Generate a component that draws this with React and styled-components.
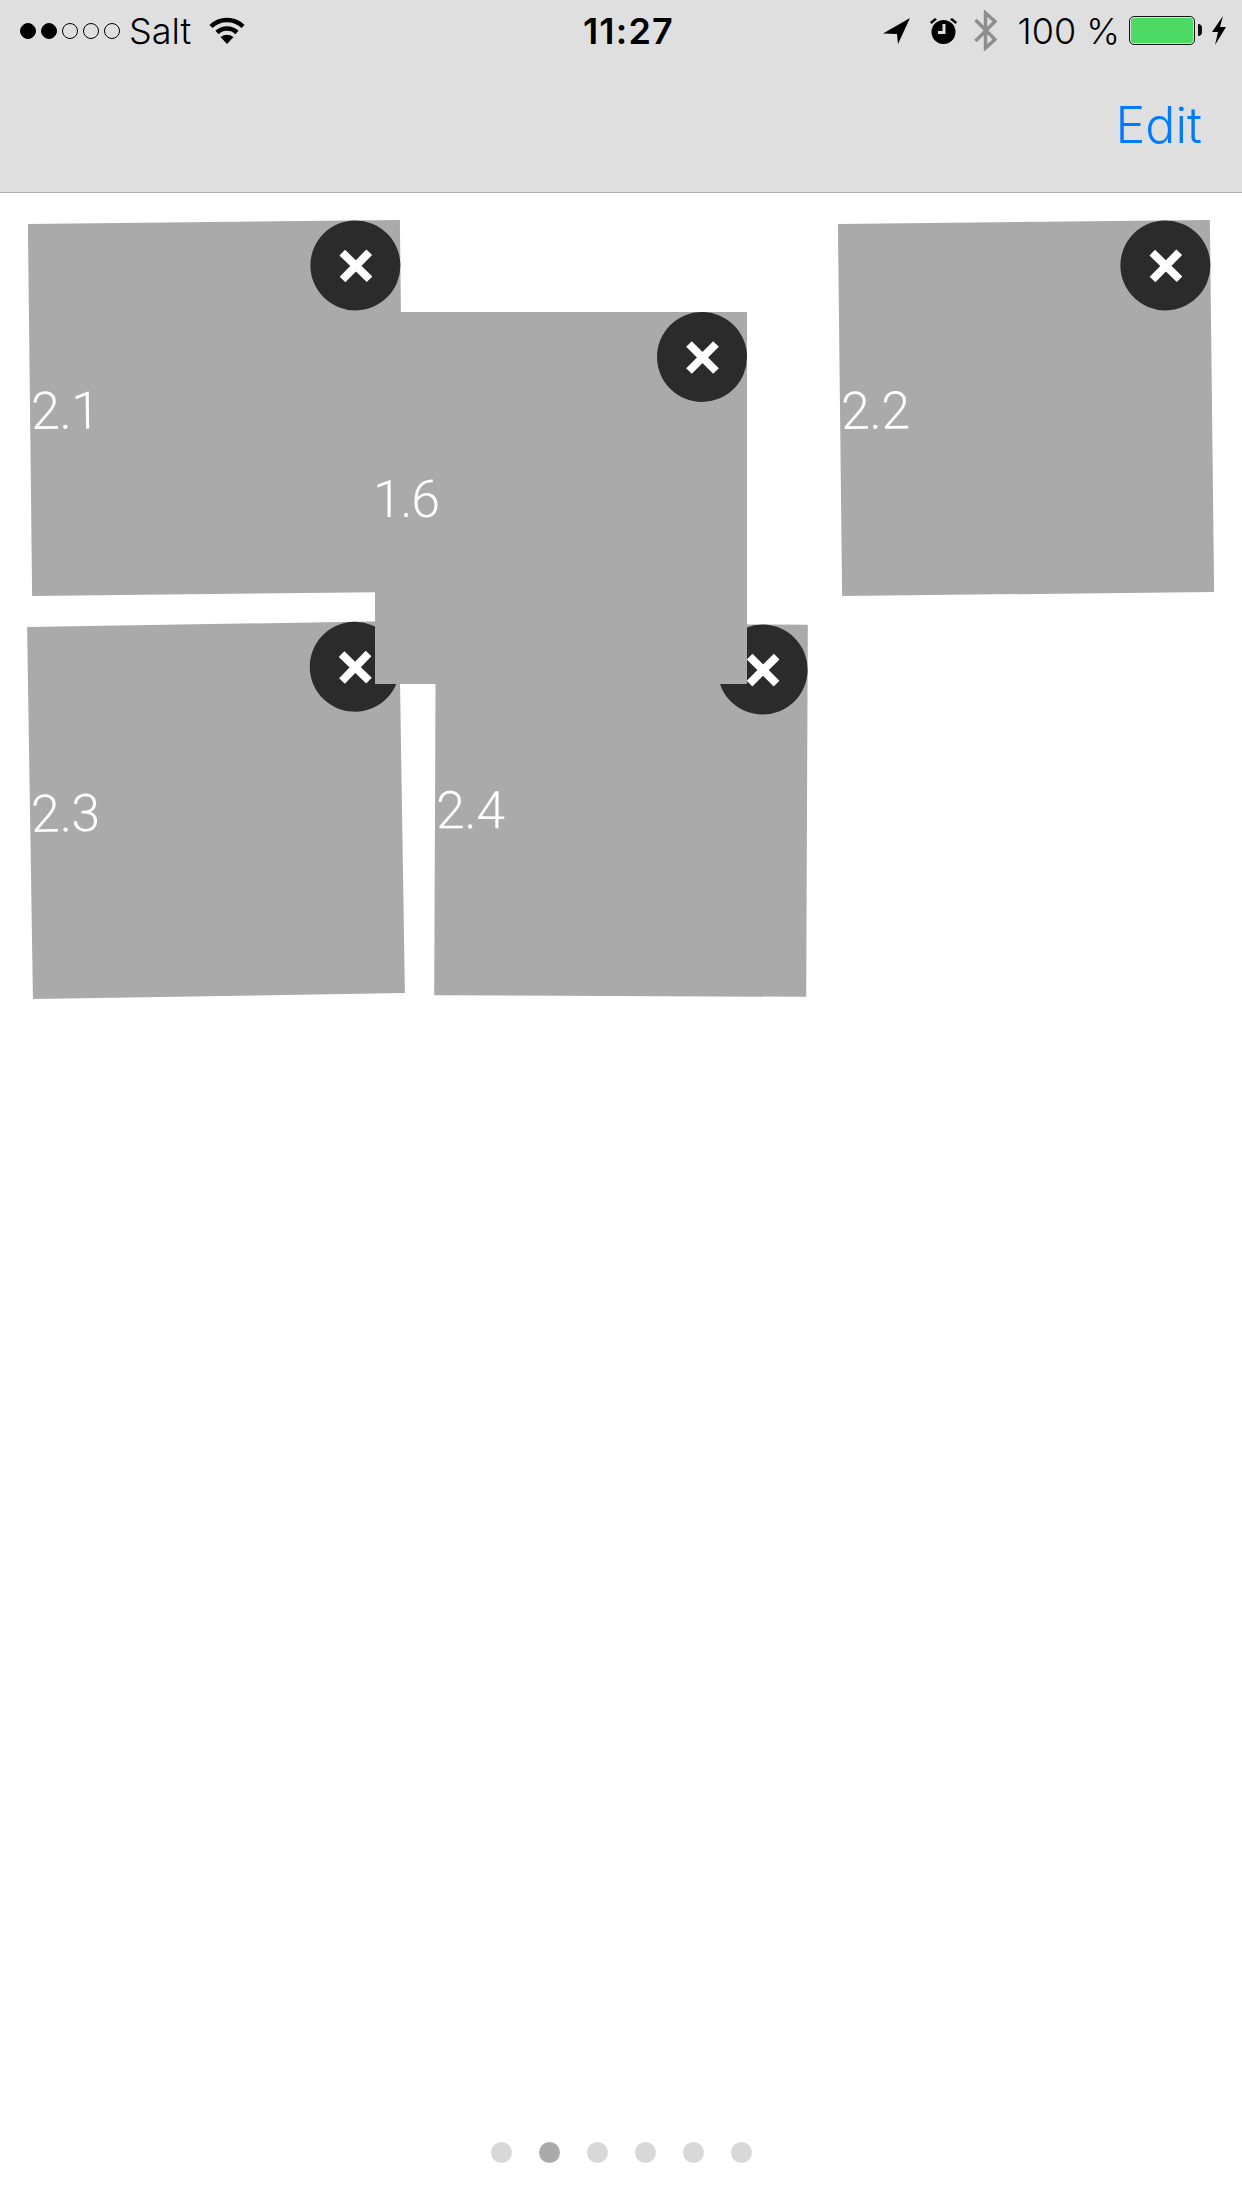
import React from 'react';
import styled, { createGlobalStyle } from 'styled-components';

const GlobalStyle = createGlobalStyle`
  html, body {
    background: #fff;
    margin: 0;
    padding: 0;
  }
  body {
    font-family: Inter, "Liberation Sans", sans-serif;
  }
`;

const Page = styled.div`
  display: flex;
  flex-direction: column;
  height: 2208px;
  overflow: hidden;
  width: 1242px;
`;

const Header = styled.header`
  background: #dfdfdf;
  border-bottom: 1px solid #b2b2b2;
  box-sizing: border-box;
  flex: none;
  height: 193px;
`;

const StatusBar = styled.div`
  align-items: center;
  color: #000;
  display: grid;
  font-size: 36px;
  grid-template-columns: 1fr auto 1fr;
  height: 61px;
  padding: 0 15px 0 20px;
`;

const StatusLeft = styled.div`
  align-items: center;
  display: flex;
`;

const StatusRight = styled.div`
  align-items: center;
  display: flex;
  justify-content: flex-end;
`;

const Signal = styled.div`
  display: flex;
  gap: 5px;
  margin-right: 9px;
`;

const SignalDot = styled.span`
  background: ${(props) => (props.$on ? '#000' : 'transparent')};
  border: 1px solid #000;
  border-radius: 50%;
  box-sizing: border-box;
  height: 16px;
  width: 16px;
`;

const Carrier = styled.span`
  font-weight: 300;
  margin-right: 18px;
`;

const Time = styled.span`
  font-weight: 600;
  letter-spacing: 1.2px;
  margin-left: 10px;
`;

const Percent = styled.span`
  font-weight: 300;
  margin: 0 9px 0 21px;
`;

const Icon = styled.svg`
  display: block;
  flex: none;
  margin-right: ${(props) => props.$gap || 0}px;
`;

const Battery = styled.div`
  border: 1.5px solid #111;
  border-radius: 5px;
  box-sizing: border-box;
  height: 29px;
  margin-right: 16px;
  padding: 1px;
  position: relative;
  width: 66px;

  &::after {
    background: #111;
    border-radius: 0 6px 6px 0;
    content: '';
    height: 12px;
    position: absolute;
    right: -8px;
    top: 7px;
    width: 4px;
  }
`;

const BatteryFill = styled.div`
  background: #4cd964;
  border-radius: 3px;
  height: 100%;
`;

const NavBar = styled.div`
  align-items: center;
  box-sizing: border-box;
  display: flex;
  height: 131px;
  justify-content: flex-end;
  padding: 0 40px 3px 0;
`;

const EditButton = styled.span`
  color: #007aff;
  font-size: 50px;
  font-weight: 300;
`;

const Board = styled.main`
  flex: 1;
  position: relative;
`;

const TileGrid = styled.div`
  display: grid;
  gap: 30px 33px;
  grid-template-columns: repeat(3, 372px);
  grid-template-rows: repeat(2, 372px);
  padding: 29px 0 0 30px;
`;

const Tile = styled.div`
  align-items: center;
  background: #aaaaaa;
  display: flex;
  grid-column: ${(props) => props.$column || 'auto'};
  height: 372px;
  position: relative;
  transform: rotate(${(props) => props.$tilt}deg);
  width: 372px;
`;

// the tile being dragged sits on top of the grid, not in it
const DraggedTile = styled(Tile)`
  left: 375px;
  position: absolute;
  top: 119px;
  z-index: 2;
`;

const TileLabel = styled.span`
  color: #fff;
  font-family: Roboto, "Liberation Sans", sans-serif;
  font-size: 52px;
  font-weight: 300;
  letter-spacing: -0.5px;
  padding: 3px 0 0 1px;
`;

// Roboto's 1 has a wider bearing than the original font
const DraggedLabel = styled(TileLabel)`
  letter-spacing: -1.5px;
  margin-left: -3px;
`;

const CloseBadge = styled.span`
  align-items: center;
  background: #2b2b2b;
  border-radius: 50%;
  display: flex;
  height: 90px;
  justify-content: center;
  position: absolute;
  right: 0;
  top: 0;
  width: 90px;
`;

const PageDots = styled.div`
  bottom: 45px;
  display: flex;
  gap: 27px;
  justify-content: center;
  left: 0;
  position: absolute;
  right: 0;
`;

const PageDot = styled.span`
  background: ${(props) => (props.$active ? '#aaaaaa' : '#d8d8d8')};
  border-radius: 50%;
  height: 21px;
  width: 21px;
`;

// 2.2 stays in column 3: the middle cell is the one 1.6 was dragged out of
const tiles = [
  { label: '2.1', tilt: -0.65 },
  { label: '2.2', tilt: -0.65, column: 3 },
  { label: '2.3', tilt: -0.9 },
  { label: '2.4', tilt: 0.25 },
];

function CloseIcon() {
  return (
    <svg width="33" height="33" viewBox="0 0 33 33">
      <path d="M3 3 L30 30 M30 3 L3 30" stroke="#fff" strokeWidth="8" fill="none" />
    </svg>
  );
}

function WifiIcon() {
  return (
    <Icon width="36" height="27" viewBox="0 0 36 27">
      <path d="M2 9.5 A23 23 0 0 1 34 9.5" stroke="#000" strokeWidth="4.5" fill="none" />
      <path d="M8 15.5 A14.5 14.5 0 0 1 28 15.5" stroke="#000" strokeWidth="4.5" fill="none" />
      <path d="M11.5 20 Q18 15.5 24.5 20 L18 27 Z" fill="#000" />
    </Icon>
  );
}

function LocationIcon() {
  return (
    <Icon width="27" height="26" viewBox="0 0 27 26" $gap={19}>
      <path d="M27 0 L0 15.5 L14 16 L15 26 Z" fill="#000" />
    </Icon>
  );
}

function AlarmIcon() {
  return (
    <Icon width="29" height="27" viewBox="0 0 29 27" $gap={16}>
      <circle cx="14.5" cy="15" r="12" fill="#000" />
      <path d="M1 5 L6 1 L8 2.5 L2.5 7 Z M28 5 L23 1 L21 2.5 L26.5 7 Z" fill="#000" />
      <path d="M15 7 V15.5 H9" stroke="#dfdfdf" strokeWidth="3" fill="none" />
    </Icon>
  );
}

function BluetoothIcon() {
  return (
    <Icon width="23" height="41" viewBox="0 0 23 41">
      <path d="M1.5 10 L21 29.5 L11.5 38 V3 L21 11.5 L1.5 31" stroke="#8e8e8e" strokeWidth="3.5" fill="none" />
    </Icon>
  );
}

function BoltIcon() {
  return (
    <Icon width="16" height="29" viewBox="0 0 16 29">
      <path d="M12 0 L1 16 H7 L4 29 L15 11 H9 Z" fill="#000" />
    </Icon>
  );
}

export default function App() {
  return (
    <Page>
      <GlobalStyle />
      <Header>
        <StatusBar>
          <StatusLeft>
            <Signal>
              {[true, true, false, false, false].map((on, i) => (
                <SignalDot key={i} $on={on} />
              ))}
            </Signal>
            <Carrier>Salt</Carrier>
            <WifiIcon />
          </StatusLeft>
          <Time>11:27</Time>
          <StatusRight>
            <LocationIcon />
            <AlarmIcon />
            <BluetoothIcon />
            <Percent>100 %</Percent>
            <Battery>
              <BatteryFill />
            </Battery>
            <BoltIcon />
          </StatusRight>
        </StatusBar>
        <NavBar>
          <EditButton>Edit</EditButton>
        </NavBar>
      </Header>
      <Board>
        <TileGrid>
          {tiles.map((tile) => (
            <Tile key={tile.label} $tilt={tile.tilt} $column={tile.column}>
              <TileLabel>{tile.label}</TileLabel>
              <CloseBadge>
                <CloseIcon />
              </CloseBadge>
            </Tile>
          ))}
        </TileGrid>
        <DraggedTile $tilt={0}>
          <DraggedLabel>1.6</DraggedLabel>
          <CloseBadge>
            <CloseIcon />
          </CloseBadge>
        </DraggedTile>
        <PageDots>
          {[0, 1, 2, 3, 4, 5].map((i) => (
            <PageDot key={i} $active={i === 1} />
          ))}
        </PageDots>
      </Board>
    </Page>
  );
}
